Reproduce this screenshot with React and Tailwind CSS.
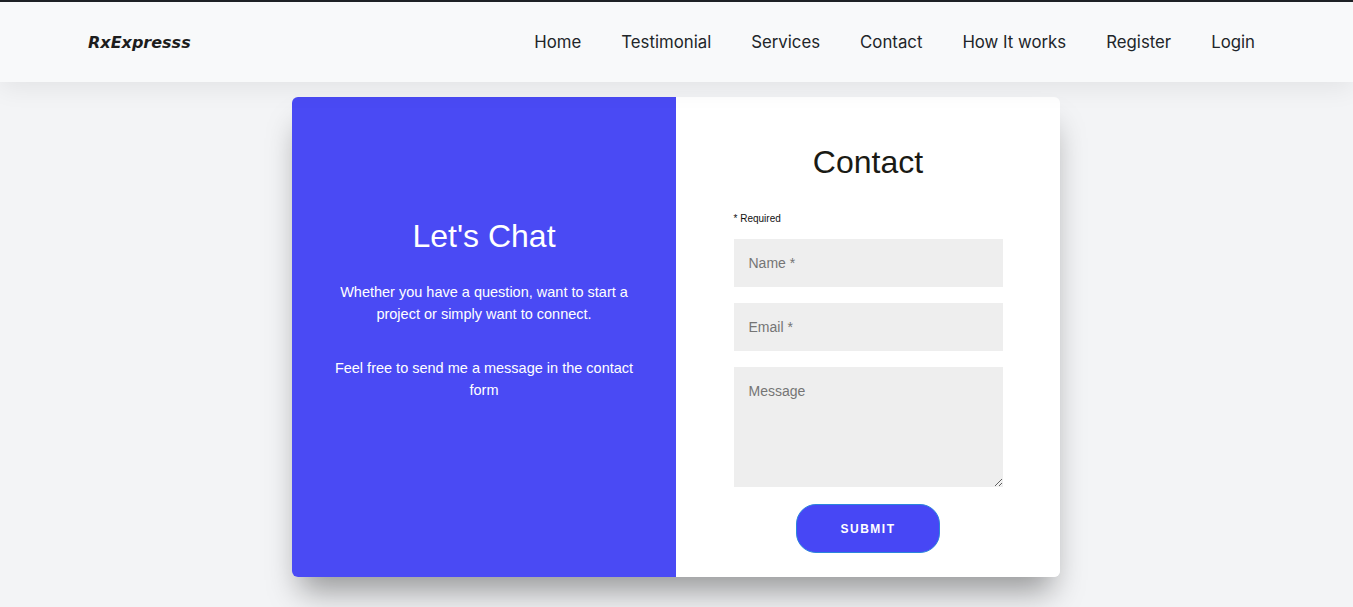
import React from "react";

export default function App() {
  const nav = ["Home", "Testimonial", "Services", "Contact", "How It works", "Register", "Login"];
  return (
    <div className="min-h-[607px] bg-[#f3f4f6] border-t-2 border-[#1f2226]" style={{ fontFamily: "'Liberation Sans', Arial, sans-serif" }}>
      <header className="h-[80px] bg-[#f8f9fa] flex items-center justify-between pl-[88px] pr-[98px] pt-[2px] shadow-[0_6px_24px_rgba(0,0,0,0.07)] relative z-10">
        <div className="text-[16px] font-bold italic text-[#1d1d1d]" style={{ fontFamily: "'DejaVu Sans', sans-serif" }}>RxExpresss</div>
        <nav className="flex items-center gap-[40px] text-[16.8px] text-[#212529]" style={{ fontFamily: "Inter, sans-serif" }}>
          {nav.map((n) => (
            <span key={n}>{n}</span>
          ))}
        </nav>
      </header>
      <main className="flex justify-center pt-[15px] pb-[30px] pr-[1px]">
        <div className="w-[768px] h-[480px] flex rounded-[6px] overflow-hidden shadow-[0_22px_30px_-8px_rgba(0,0,0,0.38)]">
          <div className="w-[384px] bg-[#4a4af4] text-white flex flex-col items-center pt-[120px] text-center">
            <h2 className="text-[32px] leading-[38px]">Let's Chat</h2>
            <p className="mt-[26px] w-[300px] text-[14.5px] leading-[22px]">Whether you have a question, want to start a project or simply want to connect.</p>
            <p className="mt-[32px] w-[310px] text-[14.5px] leading-[22px]">Feel free to send me a message in the contact form</p>
          </div>
          <div className="w-[384px] bg-white flex flex-col items-center pt-[46px]">
            <h2 className="text-[32px] leading-[38px] text-[#1a1a14]">Contact</h2>
            <div className="w-[269px] mt-[32px]">
              <div className="text-[10px] leading-[12px] text-[#111]">* Required</div>
              <input className="mt-[14px] block w-full h-[48px] bg-[#eeeeee] px-[15px] text-[14px] placeholder-[#757575] outline-none" placeholder="Name *" />
              <input className="mt-[16px] block w-full h-[48px] bg-[#eeeeee] px-[15px] text-[14px] placeholder-[#757575] outline-none" placeholder="Email *" />
              <textarea className="mt-[16px] block w-full h-[120px] bg-[#eeeeee] px-[15px] pt-[14px] text-[14px] placeholder-[#757575] outline-none" placeholder="Message" />
            </div>
            <button className="mt-[17px] w-[144px] h-[49px] rounded-[20px] bg-[#4747f5] border-[1.5px] border-[#2b86dc] text-white text-[12px] font-bold tracking-[1.5px]">SUBMIT</button>
          </div>
        </div>
      </main>
    </div>
  );
}
